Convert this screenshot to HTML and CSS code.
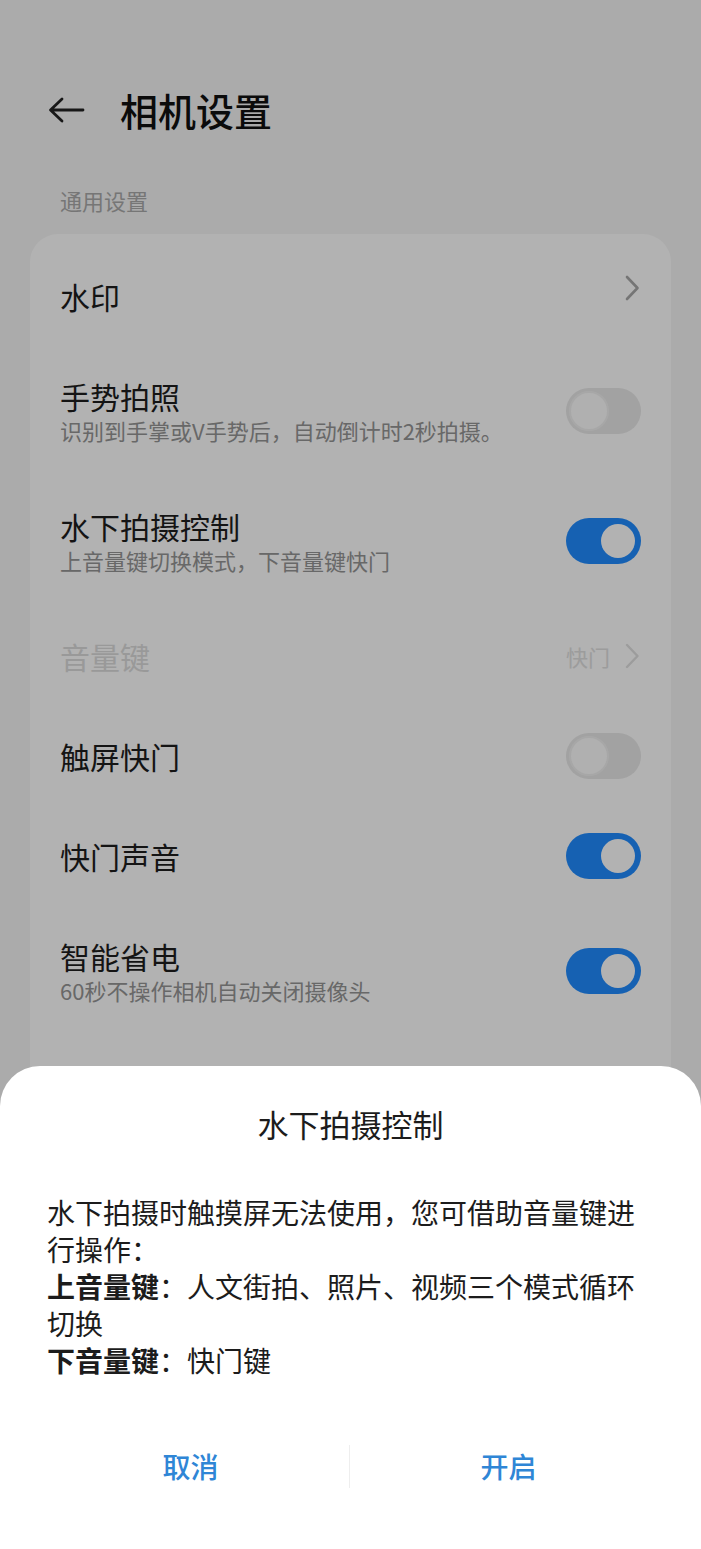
FILE: index.html
```html
<!DOCTYPE html>
<html lang="zh-CN">
<head>
  <meta charset="UTF-8" />
  <title>相机设置</title>
  <link rel="stylesheet" href="styles.css">
</head>
<body>

  <!-- 상단 바 -->
  <header class="topbar">
    <svg class="back" width="38" height="26" viewBox="0 0 38 26">
      <path d="M36 13H4M15 2L3.5 13L15 24" fill="none" stroke="#222" stroke-width="2.8" stroke-linecap="round" stroke-linejoin="round"/>
    </svg>
    <h1 class="title">相机设置</h1>
  </header>

  <div class="section-label">通用设置</div>

  <!-- 설정 카드 -->
  <div class="card">
    <div class="row">
      <div class="text"><div class="name">水印</div></div>
      <svg class="chevron raised" width="16" height="26" viewBox="0 0 16 26"><path d="M3 2l10.5 11L3 24" fill="none" stroke="#a8a8a8" stroke-width="2.6" stroke-linecap="round" stroke-linejoin="round"/></svg>
    </div>

    <div class="row two">
      <div class="text">
        <div class="name">手势拍照</div>
        <div class="desc">识别到手掌或V手势后，自动倒计时2秒拍摄。</div>
      </div>
      <span class="switch"></span>
    </div>

    <div class="row two">
      <div class="text">
        <div class="name">水下拍摄控制</div>
        <div class="desc">上音量键切换模式，下音量键快门</div>
      </div>
      <span class="switch on"></span>
    </div>

    <div class="row disabled">
      <div class="text"><div class="name">音量键</div></div>
      <div class="value">
        快门
        <svg class="chevron" width="16" height="26" viewBox="0 0 16 26"><path d="M3 2l10.5 11L3 24" fill="none" stroke="#e0e0e0" stroke-width="2.4" stroke-linecap="round" stroke-linejoin="round"/></svg>
      </div>
    </div>

    <div class="row">
      <div class="text"><div class="name">触屏快门</div></div>
      <span class="switch"></span>
    </div>

    <div class="row">
      <div class="text"><div class="name">快门声音</div></div>
      <span class="switch on"></span>
    </div>

    <div class="row two">
      <div class="text">
        <div class="name">智能省电</div>
        <div class="desc">60秒不操作相机自动关闭摄像头</div>
      </div>
      <span class="switch on"></span>
    </div>

    <div class="row last">
      <div class="text"><div class="name">保留位置信息</div></div>
      <span class="switch on"></span>
    </div>
  </div>

  <!-- 딤 처리 + 하단 시트 -->
  <div class="dim"></div>

  <div class="sheet">
    <h2 class="sheet-title">水下拍摄控制</h2>
    <p class="sheet-body">
      水下拍摄时触摸屏无法使用，您可借助音量键进行操作：<br>
      <b>上音量键</b>：人文街拍、照片、视频三个模式循环切换<br>
      <b>下音量键</b>：快门键
    </p>
    <div class="actions">
      <button class="btn">取消</button>
      <span class="sep"></span>
      <button class="btn">开启</button>
    </div>
  </div>

</body>
</html>
```

FILE: styles.css
```css
/* 기본 레이아웃 */
body {
  margin: 0;
  background: #f5f5f5;
  font-family: "Noto Sans CJK SC", "Noto Sans", sans-serif;
  color: #222;
}

.topbar {
  display: flex;
  align-items: center;
  height: 60px;
  margin-top: 80px;
  padding-left: 47px;
}

.title {
  margin: 0 0 0 35px;
  font-size: 38px;
  font-weight: 500;
  line-height: 60px;
  color: #111;
}

.section-label {
  padding: 45px 60px 19px;
  font-size: 22px;
  line-height: 30px;
  color: #aaa;
}

/* 설정 카드 */
.card {
  margin: 0 30px;
  padding: 12px 30px;
  background: #fff;
  border-radius: 28px;
}

.row {
  display: flex;
  align-items: center;
  justify-content: space-between;
  height: 100px;
}

.row.two {
  height: 130px;
}

.row.last {
  padding-top: 4px;
}

.name {
  font-size: 30px;
  line-height: 38px;
  color: #1e1e1e;
}

.desc {
  font-size: 22px;
  line-height: 30px;
  color: #959595;
}

.row.disabled .name {
  color: #dcdcdc;
}

.value {
  display: flex;
  align-items: center;
  gap: 14px;
  font-size: 22px;
  color: #e0e0e0;
}

.chevron {
  display: block;
  margin-right: 1px;
}

.chevron.raised {
  margin-bottom: 16px;
}

/* 스위치 */
.switch {
  position: relative;
  flex: none;
  width: 75px;
  height: 46px;
  border-radius: 23px;
  background: #e8e8e8;
}

.switch::after {
  content: "";
  position: absolute;
  top: 3px;
  left: 3px;
  width: 36px;
  height: 36px;
  border: 2px solid #f0f0f0;
  border-radius: 50%;
  background: #fcfcfc;
}

.switch.on {
  background: #208cff;
}

.switch.on::after {
  top: 6px;
  left: 35px;
  width: 34px;
  height: 34px;
  border: 0;
  background: #fff;
}

/* 딤 + 하단 시트 */
.dim {
  position: fixed;
  inset: 0;
  background: rgba(0, 0, 0, 0.3);
}

.sheet {
  position: fixed;
  left: 0;
  right: 0;
  bottom: 0;
  padding: 40px 0 56px;
  background: #fff;
  border-radius: 40px 40px 0 0;
}

.sheet-title {
  margin: 0;
  font-size: 31px;
  font-weight: 400;
  line-height: 36px;
  text-align: center;
  color: #1c1c1c;
}

.sheet-body {
  margin: 52px 47px 60px;
  font-size: 28px;
  line-height: 37px;
  color: #1c1c1c;
}

.sheet-body b {
  font-weight: 700;
}

.actions {
  display: flex;
  align-items: center;
  height: 54px;
  padding: 0 34px 0 32px;
}

.btn {
  flex: 1;
  padding: 0;
  border: 0;
  background: none;
  font-family: inherit;
  font-size: 28px;
  font-weight: 500;
  color: #2f86d6;
}

.sep {
  width: 1px;
  height: 43px;
  background: #eee;
}
```
